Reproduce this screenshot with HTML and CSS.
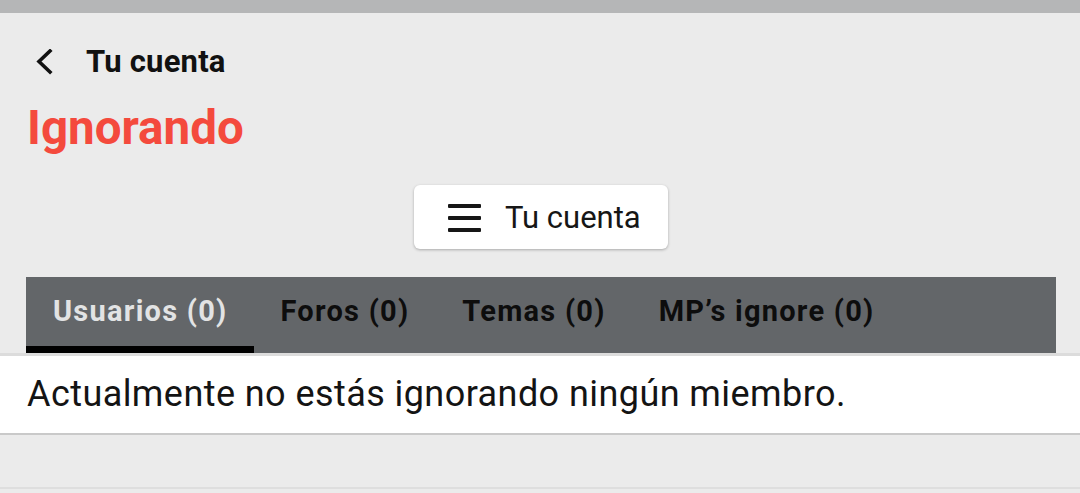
FILE: index.html
```html
<!DOCTYPE html>
<html lang="es">
<head>
<meta charset="utf-8">
<title>Ignorando</title>
<link rel="stylesheet" href="styles.css">
</head>
<body>
<div class="topbar"></div>
<header class="header">
  <div class="back-row">
    <svg class="back-icon" width="20" height="26" viewBox="0 0 20 26" aria-hidden="true">
      <polyline points="15,2 4,12.5 15,23" fill="none" stroke="#111" stroke-width="3.6" stroke-linecap="square" stroke-linejoin="miter"/>
    </svg>
    <span class="back-label">Tu cuenta</span>
  </div>
  <h1 class="title">Ignorando</h1>
</header>
<div class="menu-wrap">
  <button class="menu-btn" type="button">
    <svg class="menu-icon" width="33" height="30" viewBox="0 0 33 30" aria-hidden="true">
      <rect x="0" y="2" width="33" height="4" rx="1" fill="#161616"/>
      <rect x="0" y="14" width="33" height="4" rx="1" fill="#161616"/>
      <rect x="0" y="26" width="33" height="4" rx="1" fill="#161616"/>
    </svg>
    <span>Tu cuenta</span>
  </button>
</div>
<nav class="tabs">
  <a class="tab active">Usuarios (0)</a>
  <a class="tab">Foros (0)</a>
  <a class="tab">Temas (0)</a>
  <a class="tab">MP’s ignore (0)</a>
</nav>
<section class="content">
  <p class="message">Actualmente no estás ignorando ningún miembro.</p>
</section>
<div class="footer-line"></div>
</body>
</html>
```

FILE: styles.css
```css
* { box-sizing: border-box; }
html, body { margin: 0; padding: 0; }
body {
  background: #ebebeb;
  font-family: Roboto, "Liberation Sans", sans-serif;
  color: #111;
  width: 1080px;
  height: 493px;
  overflow: hidden;
}
.topbar {
  height: 13px;
  background: #b5b6b7;
}
.header {
  padding: 27px 0 0 27px;
}
.back-row {
  display: flex;
  align-items: center;
  height: 44px;
}
.back-icon {
  margin-left: 8px;
  margin-right: 31px;
}
.back-label {
  font-size: 31px;
  line-height: 44px;
  font-weight: 700;
  letter-spacing: 0.2px;
  color: #111;
}
.title {
  margin: 16px 0 0 0;
  font-size: 47.5px;
  line-height: 56px;
  font-weight: 700;
  color: #f44a3d;
}
.menu-wrap {
  display: flex;
  justify-content: center;
  padding-top: 29px;
  padding-left: 2px;
}
.menu-btn {
  display: flex;
  align-items: center;
  height: 64px;
  width: 254px;
  padding: 0 0 0 34px;
  background: #fff;
  border: none;
  border-radius: 6px;
  box-shadow: 0 1px 3px rgba(0,0,0,0.28);
  font-family: Roboto, "Liberation Sans", sans-serif;
  font-size: 31px;
  color: #161616;
}
.menu-icon {
  margin-right: 24px;
}
.tabs {
  display: flex;
  margin: 28px 24px 0 26px;
  background: #636669;
  height: 76px;
}
.tab {
  display: block;
  padding: 0 26px 0 27px;
  height: 76px;
  line-height: 69px;
  border-bottom: 7px solid transparent;
  font-size: 29px;
  font-weight: 700;
  letter-spacing: 1.25px;
  color: #0d0d0d;
  white-space: nowrap;
}
.tab.active {
  color: #e2e3e4;
  border-bottom-color: #000;
}
.content {
  background: #fff;
  border-top: 3px solid #dcdcdc;
  border-bottom: 2px solid #c9c9c9;
}
.message {
  margin: 0;
  padding-left: 27px;
  font-size: 36px;
  line-height: 77px;
  letter-spacing: 0.43px;
  color: #141414;
}
.footer-line {
  margin-top: 52px;
  border-top: 2px solid #dedede;
}
```
